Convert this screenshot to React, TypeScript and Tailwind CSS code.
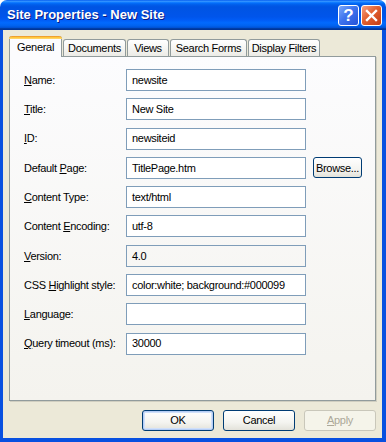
import React from 'react';

type Field = {
  label: string;
  u: number;
  value: string;
  readOnly?: boolean;
  browse?: boolean;
};

const fields: Field[] = [
  { label: 'Name:', u: 0, value: 'newsite' },
  { label: 'Title:', u: 0, value: 'New Site' },
  { label: 'ID:', u: 0, value: 'newsiteid' },
  { label: 'Default Page:', u: 8, value: 'TitlePage.htm', browse: true },
  { label: 'Content Type:', u: 0, value: 'text/html' },
  { label: 'Content Encoding:', u: 8, value: 'utf-8' },
  { label: 'Version:', u: 0, value: '4.0', readOnly: true },
  { label: 'CSS Highlight style:', u: 4, value: 'color:white; background:#000099' },
  { label: 'Language:', u: 0, value: '' },
  { label: 'Query timeout (ms):', u: 0, value: '30000' },
];

const Accel = ({ text, u }: { text: string; u: number }) => (
  <span>
    {text.slice(0, u)}
    <span className="underline underline-offset-[1px]">{text[u]}</span>
    {text.slice(u + 1)}
  </span>
);

const tabs = [
  { name: 'Documents', w: 'w-[63px]' },
  { name: 'Views', w: 'w-[42px]' },
  { name: 'Search Forms', w: 'w-[77px]' },
  { name: 'Display Filters', w: 'w-[72px]' },
];

const XpButton = ({
  children,
  isDefault,
  disabled,
}: {
  children: React.ReactNode;
  isDefault?: boolean;
  disabled?: boolean;
}) => (
  <div
    className={
      disabled
        ? 'w-[72px] h-[21px] rounded-[3px] border border-[#c9c7ba] bg-[#f5f4ea] text-[#aca899] flex items-center justify-center'
        : isDefault
        ? 'w-[72px] h-[21px] rounded-[3px] border border-[#003c74] bg-[linear-gradient(180deg,#ffffff_0%,#f4f4f0_60%,#e3e2da_100%)] shadow-[inset_0_0_0_1px_#b5cdf5,inset_0_0_0_2px_#d0e0fa] flex items-center justify-center text-black'
        : 'w-[72px] h-[21px] rounded-[3px] border border-[#003c74] bg-[linear-gradient(180deg,#ffffff_0%,#f4f4f0_60%,#e3e2da_100%)] flex items-center justify-center text-black'
    }
  >
    {children}
  </div>
);

export default function App() {
  return (
    <div className="w-[386px] h-[442px] bg-white font-['Liberation_Sans',Arial,sans-serif] text-[11px] tracking-[-0.3px] text-black select-none">
      <div className="w-full h-full flex flex-col rounded-t-[7px] overflow-hidden">
        {/* Title bar */}
        <div className="h-[30px] flex items-center pl-[7px] pr-[4px] bg-[linear-gradient(180deg,#0058ee_0%,#3593ff_4%,#288eff_6%,#127dff_8%,#036ffc_10%,#0262ee_14%,#0057e5_20%,#0054e3_24%,#0055eb_56%,#005bf5_66%,#026afe_76%,#0062ef_86%,#0052d6_92%,#0040ab_94%,#003092_100%)]">
          <span className="flex-1 text-white font-bold text-[13px] tracking-[0px] [text-shadow:1px_1px_0_#0a1883]">
            Site Properties - New Site
          </span>
          <div className="w-[21px] h-[21px] rounded-[3px] border border-white bg-[linear-gradient(135deg,#7aa8fa_0%,#3f74ee_45%,#2553d8_100%)] flex items-center justify-center text-white font-bold text-[17px] leading-none tracking-[0px]">
            ?
          </div>
          <div className="w-[21px] h-[21px] ml-[2px] rounded-[3px] border border-white bg-[linear-gradient(135deg,#f5a084_0%,#e2602f_45%,#c23d16_100%)] flex items-center justify-center">
            <svg width="13" height="13" viewBox="0 0 13 13">
              <path d="M2 2 L11 11 M11 2 L2 11" stroke="white" strokeWidth="2.4" strokeLinecap="square" />
            </svg>
          </div>
        </div>

        {/* Body */}
        <div className="flex-1 flex flex-col bg-[#ece9d8] border-l-[3px] border-r-[4px] border-b-[4px] border-[#0850e0]">
          <div className="pl-[6px] pr-[6px] pt-[6px]">
            {/* Tabs */}
            <div className="flex items-end h-[20px]">
              <div className="relative z-10 w-[53px] h-[21px] -mb-[1px] rounded-t-[3px] border-x border-[#919b9c] bg-[#fcfcfe] flex flex-col">
                <div className="h-[3px] rounded-t-[3px] -mx-px bg-[linear-gradient(180deg,#e68b2c_0%,#ffc83c_50%,#ffd87a_100%)]" />
                <div className="flex-1 flex items-center pl-[7px] pb-[2px]">General</div>
              </div>
              {tabs.map((t) => (
                <div
                  key={t.name}
                  className={`${t.w} h-[17px] ml-px rounded-t-[3px] border border-b-0 border-[#919b9c] bg-[linear-gradient(180deg,#ffffff_0%,#f6f6f3_50%,#ecebe6_100%)] flex items-center justify-center`}
                >
                  {t.name}
                </div>
              ))}
            </div>

            {/* Panel */}
            <div className="h-[345px] border border-[#919b9c] shadow-[1px_1px_0_#d0cec0] bg-[linear-gradient(180deg,#fcfcfe_0%,#f4f3ee_100%)] pt-[12px] pl-[14px] flex flex-col gap-[7.3px]">
              {fields.map((f) => (
                <div key={f.label} className="flex items-center h-[22px]">
                  <div className="w-[102px] shrink-0">
                    <Accel text={f.label} u={f.u} />
                  </div>
                  <div
                    className={`w-[180px] h-[22px] border border-[#7f9db9] flex items-center pl-[5px] whitespace-nowrap overflow-hidden ${
                      f.readOnly ? 'bg-transparent' : 'bg-white'
                    }`}
                  >
                    {f.value}
                  </div>
                  {f.browse && (
                    <div className="ml-[7px] w-[49px] h-[21px] rounded-[3px] border border-[#003c74] bg-[linear-gradient(180deg,#ffffff_0%,#f4f4f0_60%,#e3e2da_100%)] flex items-center justify-center">
                      Browse...
                    </div>
                  )}
                </div>
              ))}
            </div>
          </div>

          {/* Buttons */}
          <div className="flex justify-end gap-[9px] pr-[6px] mt-[9px]">
            <XpButton isDefault>OK</XpButton>
            <XpButton>Cancel</XpButton>
            <XpButton disabled>
              <Accel text="Apply" u={0} />
            </XpButton>
          </div>
        </div>
      </div>
    </div>
  );
}
